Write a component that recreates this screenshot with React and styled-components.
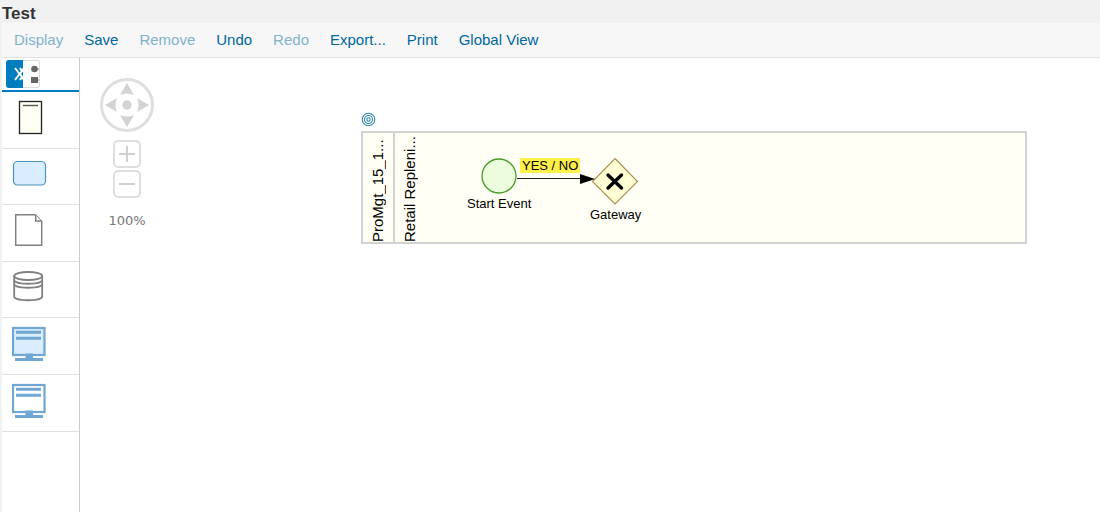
import React from "react"
import styled, { createGlobalStyle, css } from "styled-components"

const GlobalStyle = createGlobalStyle`
  * {
    box-sizing: border-box;
  }

  body {
    margin: 0;
    background: #f1f1f1;
    color: #333;
    font-family: "Liberation Sans", Arial, sans-serif;
  }

  button {
    margin: 0;
    padding: 0;
    border: none;
    background: transparent;
    font-family: inherit;
    cursor: pointer;
  }

  svg {
    display: block;
  }
`

const Page = styled.div`
  display: flex;
  flex-direction: column;
  min-height: 100vh;
  padding-left: 2px;
`

const Title = styled.h1`
  margin: 0;
  padding-top: 4px;
  height: 23px;
  font-size: 17px;
  line-height: 19px;
  color: #333;
`

const Toolbar = styled.div`
  display: flex;
  align-items: center;
  gap: 21px;
  height: 35px;
  padding: 0 12px;
  background: #f7f7f7;
  border-bottom: 1px solid #e0e0e0;
`

const ToolbarButton = styled.button`
  font-size: 15px;
  line-height: 20px;
  color: #00679e;
  white-space: nowrap;

  &:disabled {
    color: #7fb3ce;
    cursor: default;
  }
`

const Workspace = styled.main`
  flex: 1;
  display: flex;
  background: white;
`

const Sidebar = styled.aside`
  width: 78px;
  flex-shrink: 0;
  border-right: 1px solid #ccc;
`

const Tabs = styled.div`
  display: flex;
  height: 34px;
  padding: 2px 4px;
  border-bottom: 2px solid #007cc0;
`

const Tab = styled.button`
  width: 17px;
  height: 28px;
  overflow: hidden;
  border: 1px solid #ddd;
  border-left: none;
  border-radius: 0 3px 3px 0;

  ${({ $active }) =>
    $active &&
    css`
      background: #007cc0;
      border: 1px solid #007cc0;
      border-right: none;
      border-radius: 3px 0 0 3px;
    `}
`

const Palette = styled.ul`
  margin: 0;
  padding: 0;
  list-style: none;
`

const PaletteItem = styled.li`
  height: 57px;
  border-bottom: 1px solid #e0e0e0;

  &:nth-child(even) {
    height: 56px;
  }

  &:last-child {
    height: 57px;
  }
`

const PaletteButton = styled.button`
  display: block;
  padding: 8px 10px;
`

const Canvas = styled.section`
  position: relative;
  flex: 1;
  min-width: 0;
`

const Navigator = styled.div`
  display: flex;
  flex-direction: column;
  align-items: center;
  gap: 2px;
  width: 54px;
  margin: 20px 0 0 20px;
`

const PanRing = styled.div`
  display: grid;
  grid-template: repeat(3, 16px) / repeat(3, 16px);
  width: 54px;
  height: 54px;
  margin-bottom: 6px;
  border: 3px solid #dedede;
  border-radius: 50%;
`

const PanButton = styled.button`
  grid-area: ${({ $area }) => $area};
`

const ZoomButton = styled.button`
  width: 28px;
  height: 28px;
  border: 2px solid #dedede;
  border-radius: 5px;
`

const ZoomLevel = styled.output`
  margin-top: 11px;
  font-family: "DejaVu Sans", Verdana, sans-serif;
  font-size: 13px;
  line-height: 20px;
  color: #777;
`

const Marker = styled.div`
  position: absolute;
  left: 281px;
  top: 54px;
`

const Pool = styled.div`
  position: absolute;
  left: 281px;
  top: 73px;
  display: flex;
  width: 666px;
  height: 113px;
  border: 2px solid #d2d2d2;
  background: #fffff5;
`

const LaneLabel = styled.div`
  width: 30px;
  height: 100%;
  line-height: 30px;
  font-size: 15px;
  color: black;
  white-space: nowrap;
  writing-mode: vertical-rl;
  transform: rotate(180deg);
`

const Lane = styled.div`
  flex: 1;
  border-left: 2px solid #d2d2d2;
`

const Shapes = styled.svg`
  position: absolute;
  left: 400px;
  top: 90px;
`

const NodeLabel = styled.span`
  position: absolute;
  left: ${({ $x }) => $x}px;
  top: ${({ $y }) => $y}px;
  padding: 0 2px;
  font-size: 13px;
  line-height: 15px;
  color: black;
  white-space: nowrap;
  background: ${({ $highlight }) => ($highlight ? "#fff04a" : "transparent")};
`

const actions = [
  { label: "Display", disabled: true },
  { label: "Save" },
  { label: "Remove", disabled: true },
  { label: "Undo" },
  { label: "Redo", disabled: true },
  { label: "Export..." },
  { label: "Print" },
  { label: "Global View" },
]

const PoolIcon = () => (
  <>
    <rect x="7.500" y="1.500" width="22" height="32" fill="#fffff3" stroke="#222" strokeWidth="1.3" />
    <path d="M11 5.500h15" stroke="#555" strokeWidth="1.4" />
  </>
)

const TaskIcon = () => (
  <rect x="1.5" y="4.5" width="32" height="23.5" rx="4" fill="#d9edff" stroke="#4a93b8" strokeWidth="1.2" />
)

const DocumentIcon = () => (
  <g fill="none" stroke="#808080" strokeWidth="1.5">
    <path d="M23.500 1.700H3.700v30.600h26V8" />
    <path d="M23.700 1.700V8h6" />
    <path d="M23.700 1.700L29.700 8" strokeWidth="1" />
  </g>
)

const DatabaseIcon = () => (
  <g fill="none" stroke="#808080" strokeWidth="1.8">
    <ellipse cx="16.2" cy="6" rx="14" ry="4" />
    <path d="M2.200 6v20.500c0 5 28 5 28 0V6" />
    <path d="M2.200 10c0 5 28 5 28 0M2.200 14c0 5 28 5 28 0" />
  </g>
)

const SystemIcon = ({ fill }) => (
  <>
    <rect x="1" y="2" width="31.500" height="27" fill={fill} stroke="#6fa6d3" strokeWidth="2.200" />
    <path d="M4 6.200h25M4 12.200h25" stroke="#6fa6d3" strokeWidth="3" />
    <path d="M13.500 27.500h7.500v4.500h10v3H3v-3h10.500z" fill="#6fa6d3" />
  </>
)

const palette = [
  { label: "Pool", icon: <PoolIcon /> },
  { label: "Task", icon: <TaskIcon /> },
  { label: "Data object", icon: <DocumentIcon /> },
  { label: "Data store", icon: <DatabaseIcon /> },
  { label: "IT system", icon: <SystemIcon fill="#d9edff" /> },
  { label: "External IT system", icon: <SystemIcon fill="white" /> },
]

const directions = [
  { label: "Pan up", area: "1 / 2", angle: 0 },
  { label: "Pan right", area: "2 / 3", angle: 90 },
  { label: "Pan down", area: "3 / 2", angle: 180 },
  { label: "Pan left", area: "2 / 1", angle: 270 },
]

const PanControl = () => (
  <PanRing>
    {directions.map(({ label, area, angle }) => (
      <PanButton key={label} $area={area} aria-label={label}>
        <svg width="16" height="16">
          <path
            d="M8 2l7 12q-7-3-14 0z"
            fill="#d3d3d3"
            transform={`rotate(${angle} 8 8)`}
          />
        </svg>
      </PanButton>
    ))}
    <PanButton $area="2 / 2" aria-label="Center">
      <svg width="16" height="16">
        <circle cx="8" cy="8" r="4.7" fill="#d3d3d3" />
      </svg>
    </PanButton>
  </PanRing>
)

const Diagram = () => (
  <>
    <Marker>
      <svg width="16" height="16" fill="none" stroke="#2f86b3" strokeWidth="1.1">
        <circle cx="7.5" cy="7.5" r="6.3" />
        <circle cx="7.5" cy="7.5" r="4" />
        <circle cx="7.5" cy="7.5" r="1.7" />
      </svg>
    </Marker>
    <Pool>
      <LaneLabel>ProMgt_15_1...</LaneLabel>
      <Lane>
        <LaneLabel>Retail Repleni...</LaneLabel>
      </Lane>
    </Pool>
    <Shapes width="170" height="70">
      <circle cx="19" cy="28" r="17" fill="#ebfddc" stroke="#469a26" strokeWidth="1.3" />
      <path d="M37 30.500h66" stroke="#222" strokeWidth="1.2" />
      <path d="M135 10.500l22.500 23-22.500 22.500L112.500 33.500z" fill="#fffed4" stroke="#a98d4f" strokeWidth="1.1" />
      <path d="M100 26l15 5-15 5z" fill="black" />
      <path
        d="M128 27l13.500 13M141.500 27l-13.500 13"
        stroke="black"
        strokeWidth="3.400"
        strokeLinecap="round"
      />
    </Shapes>
    <NodeLabel $x={440} $y={100} $highlight>
      YES / NO
    </NodeLabel>
    <NodeLabel $x={385} $y={138}>
      Start Event
    </NodeLabel>
    <NodeLabel $x={508} $y={149}>
      Gateway
    </NodeLabel>
  </>
)

const App = () => (
  <Page>
    <GlobalStyle />
    <Title>Test</Title>
    <Toolbar>
      {actions.map(({ label, disabled }) => (
        <ToolbarButton key={label} disabled={disabled}>
          {label}
        </ToolbarButton>
      ))}
    </Toolbar>
    <Workspace>
      <Sidebar>
        <Tabs>
          <Tab $active aria-label="Shapes">
            <svg width="16" height="26" fill="none" stroke="white" strokeWidth="2">
              <path d="M8 7l4.500 6L8 19M17 7l-4 6 4 6M13 7l2.500 4M13 19l2.500-4" />
            </svg>
          </Tab>
          <Tab aria-label="Attributes">
            <svg width="16" height="26" fill="#666">
              <circle cx="11.500" cy="8" r="3.300" />
              <path d="M8 16h7v6H8zM14 7.500h2v1h-2zM15 18.500h1v1h-1z" />
            </svg>
          </Tab>
        </Tabs>
        <Palette>
          {palette.map(({ label, icon }) => (
            <PaletteItem key={label}>
              <PaletteButton aria-label={label}>
                <svg width="36" height="36">{icon}</svg>
              </PaletteButton>
            </PaletteItem>
          ))}
        </Palette>
      </Sidebar>
      <Canvas>
        <Navigator>
          <PanControl />
          <ZoomButton aria-label="Zoom in">
            <svg width="24" height="24" stroke="#d0d0d0" strokeWidth="2">
              <path d="M4 12h16M12 4v16" />
            </svg>
          </ZoomButton>
          <ZoomButton aria-label="Zoom out">
            <svg width="24" height="24" stroke="#d0d0d0" strokeWidth="2">
              <path d="M4 12h16" />
            </svg>
          </ZoomButton>
          <ZoomLevel>100%</ZoomLevel>
        </Navigator>
        <Diagram />
      </Canvas>
    </Workspace>
  </Page>
)

export default App
